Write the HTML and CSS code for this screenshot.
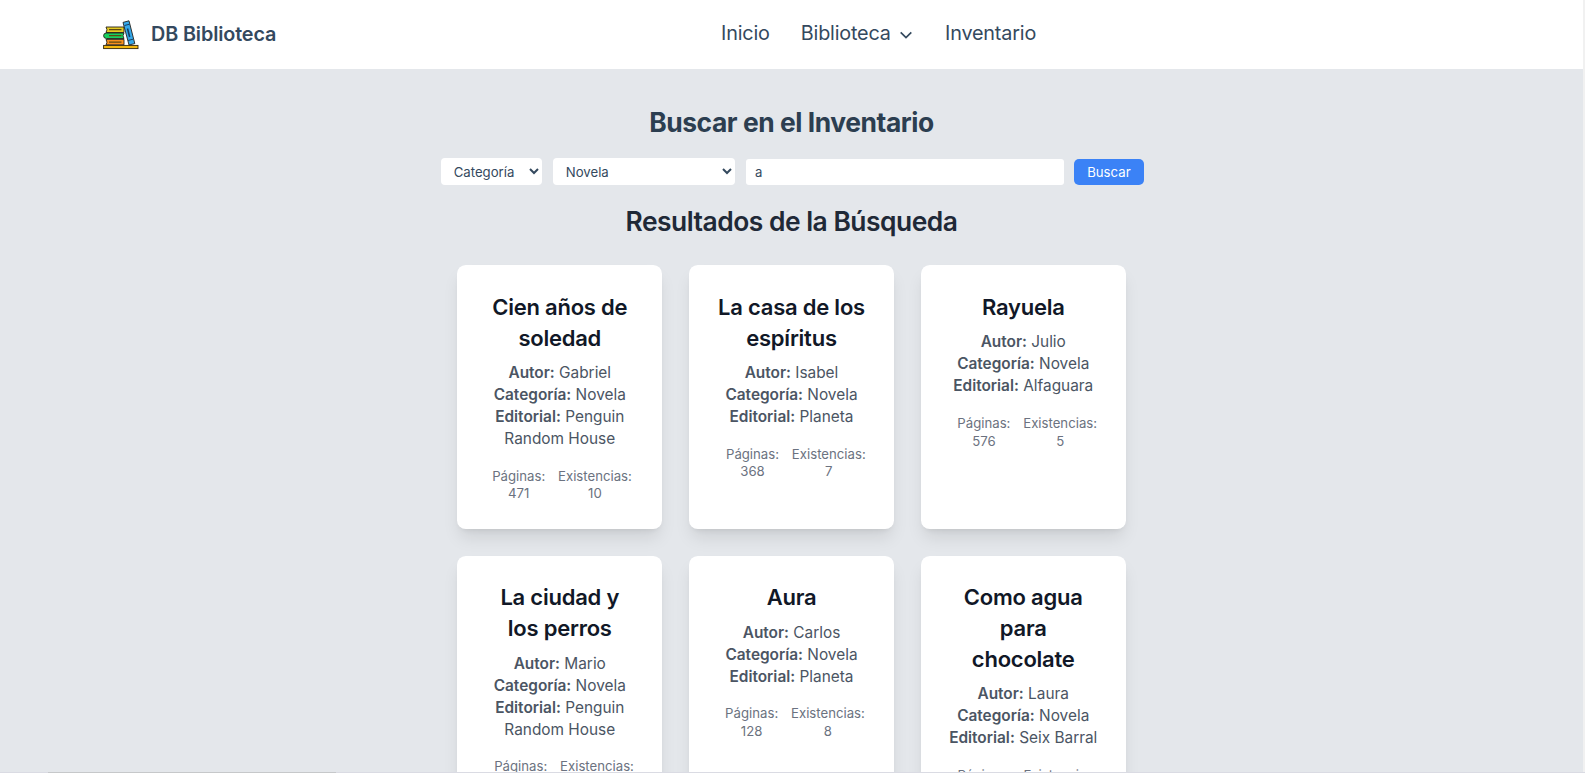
FILE: index.html
```html
<!DOCTYPE html>
<html lang="es">
<head>
<meta charset="utf-8">
<title>DB Biblioteca</title>
<link rel="stylesheet" href="styles.css">
</head>
<body>
<div class="page">
  <header class="header">
    <a class="brand">
      <svg class="logo" viewBox="0 0 36 30">
        <rect x=".6" y="25.400" width="34.400" height="3.200" fill="#f2b70f" stroke="#33270c" stroke-width=".9"/>
        <g stroke="#26221c" stroke-width=".9">
          <path d="M3 7h18v5.500H3l1-2.700z" fill="#e6cb22"/>
          <path d="M21 13H3.500Q.6 13 .6 15.700T3.500 18.500H21l-1-2.700z" fill="#17d05e"/>
          <path d="M3 19.400h18v5.400H3l1-2.600z" fill="#f78f1e"/>
          <path d="M20 2.400 26 .8 31.800 23.600 26 25z" fill="#36a8ea"/>
        </g>
        <path d="M6 9.700h12.500M6 15.700h12.500M6 22.200h12.500" stroke="#5c4a12" stroke-width="1.300"/>
        <path d="m21.500 5.500 5-1.300M25 20.500l5-1.300" stroke="#163f60" stroke-width="1"/>
        <path d="m24.500 8.500 2.200 8.500" stroke="#123f63" stroke-width="1.600"/>
      </svg>
      <span>DB Biblioteca</span>
    </a>
    <nav class="nav">
      <a>Inicio</a>
      <a class="nav-menu">Biblioteca
        <svg class="chevron" viewBox="0 0 12 8"><path d="m.7 1.300 5.300 5.200 5.300-5.200"/></svg>
      </a>
      <a>Inventario</a>
    </nav>
  </header>
  <main class="main">
    <h1 class="heading">Buscar en el Inventario</h1>
    <form class="search">
      <select class="select select-field"><option>Categoría</option></select>
      <select class="select select-value"><option>Novela</option></select>
      <input class="query" type="text" value="a">
      <button class="submit" type="button">Buscar</button>
    </form>
    <h2 class="results-heading">Resultados de la Búsqueda</h2>
    <section class="grid">
      <article class="card">
        <h3>Cien años de soledad</h3>
        <p><b>Autor:</b> Gabriel</p>
        <p><b>Categoría:</b> Novela</p>
        <p><b>Editorial:</b> Penguin Random House</p>
        <div class="stats"><span>Páginas: 471</span><span>Existencias: 10</span></div>
      </article>
      <article class="card">
        <h3>La casa de los espíritus</h3>
        <p><b>Autor:</b> Isabel</p>
        <p><b>Categoría:</b> Novela</p>
        <p><b>Editorial:</b> Planeta</p>
        <div class="stats"><span>Páginas: 368</span><span>Existencias: 7</span></div>
      </article>
      <article class="card">
        <h3>Rayuela</h3>
        <p><b>Autor:</b> Julio</p>
        <p><b>Categoría:</b> Novela</p>
        <p><b>Editorial:</b> Alfaguara</p>
        <div class="stats"><span>Páginas: 576</span><span>Existencias: 5</span></div>
      </article>
      <article class="card">
        <h3>La ciudad y los perros</h3>
        <p><b>Autor:</b> Mario</p>
        <p><b>Categoría:</b> Novela</p>
        <p><b>Editorial:</b> Penguin Random House</p>
        <div class="stats"><span>Páginas: 408</span><span>Existencias: 6</span></div>
      </article>
      <article class="card">
        <h3>Aura</h3>
        <p><b>Autor:</b> Carlos</p>
        <p><b>Categoría:</b> Novela</p>
        <p><b>Editorial:</b> Planeta</p>
        <div class="stats"><span>Páginas: 128</span><span>Existencias: 8</span></div>
      </article>
      <article class="card">
        <h3>Como agua para chocolate</h3>
        <p><b>Autor:</b> Laura</p>
        <p><b>Categoría:</b> Novela</p>
        <p><b>Editorial:</b> Seix Barral</p>
        <div class="stats"><span>Páginas: 256</span><span>Existencias: 9</span></div>
      </article>
    </section>
  </main>
</div>
<div class="bottom-edge"><div class="bottom-thumb"></div></div>
</body>
</html>
```
FILE: styles.css
```css
* { box-sizing: border-box; margin: 0; }
html { font-size: 17.6px; }
body {
  height: 773px;
  overflow: hidden;
  background: #f1f1f1;
  font-family: Inter, "Liberation Sans", sans-serif;
}
.page { width: 1583px; height: 772px; overflow: hidden; background: #e4e7eb; }
.header {
  display: flex;
  align-items: center;
  height: 69px;
  padding: 0 0 2px 102.5px;
  background: #fff;
  color: #34495e;
}
.brand {
  display: flex;
  align-items: center;
  gap: 12.5px;
  width: 618.5px;
  font-size: 19.8px;
  font-weight: 600;
  letter-spacing: -.12px;
}
.logo { width: 36px; height: 30px; fill: none; margin-top: 2px; }
.nav { display: flex; gap: 31px; padding-bottom: 2px; font-size: 19.8px; letter-spacing: -.17px; }
.nav-menu { display: flex; align-items: center; gap: 9px; margin-right: 2.3px; }
.chevron { width: 12px; height: 8px; fill: none; stroke: #34495e; stroke-width: 1.7; margin-top: 4px; }
.main { width: 739.2px; margin: 0 auto; padding-top: 36.4px; }
.heading, .results-heading {
  font-size: 26.4px;
  line-height: 35.2px;
  text-align: center;
}
.heading { font-weight: 700; color: #2c3e50; letter-spacing: -.44px; }
.results-heading { margin-top: 18.9px; font-weight: 600; color: #1f2937; letter-spacing: -.49px; }
.search {
  display: flex;
  align-items: flex-end;
  height: 27px;
  margin-top: 17.8px;
  padding-left: 19px;
}
.select, .query, .submit { border: 0; font-family: inherit; font-size: 13.2px; }
.select { height: 27px; padding: 0 0 0 8.8px; border-radius: 4px; background: #fff; color: #34495e; }
.select-field { width: 101px; }
.select-value { width: 182px; margin-left: 11px; }
.query { width: 318px; height: 26px; margin-left: 11px; padding: 0 9px; border-radius: 3px; color: #34495e; }
.submit { width: 70px; height: 26px; margin-left: 10px; padding-bottom: 2px; border-radius: 5px; background: #3b82f6; color: #fff; }
.grid {
  display: grid;
  grid-template-columns: repeat(3, 1fr);
  gap: 1.5rem;
  margin-top: 25.9px;
  padding: 0 2rem;
}
.card {
  padding: 1.5rem;
  border-radius: .5rem;
  background: #fff;
  box-shadow: 0 11px 16.5px -3.3px rgb(0 0 0 / .1), 0 4.4px 6.6px -4.4px rgb(0 0 0 / .1);
  color: #4b5563;
  font-size: 15.4px;
  line-height: 22px;
  text-align: center;
}
.card h3 {
  margin-bottom: .5rem;
  color: #111827;
  font-size: 22px;
  font-weight: 600;
  letter-spacing: -.23px;
  line-height: 30.8px;
}
.card b { font-weight: 600; }
.stats {
  display: flex;
  justify-content: space-between;
  margin-top: 1rem;
  color: #6b7280;
  font-size: 13.2px;
  line-height: 17.6px;
}
.bottom-edge { height: 1px; padding-left: 48px; background: #dadbe3; }
.bottom-thumb { width: 288px; height: 1px; background: #c6c8ca; }
```
